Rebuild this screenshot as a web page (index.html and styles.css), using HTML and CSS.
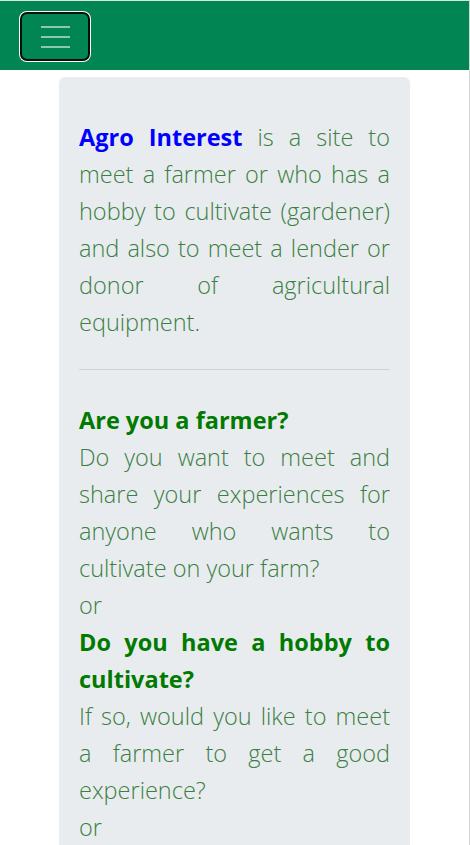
FILE: index.html
```html
<!DOCTYPE html>
<html lang="en">
<head>
<meta charset="utf-8">
<title>Agro Interest</title>
<link rel="stylesheet" href="styles.css">
</head>
<body>
<div class="page">
  <nav class="navbar">
    <button class="toggler" aria-label="Toggle navigation">
      <svg width="29" height="22" viewBox="0 0 29 22" aria-hidden="true">
        <path d="M0 1H29M0 11H29M0 21H29" stroke="rgba(255,255,255,0.55)" stroke-width="2.2"/>
      </svg>
    </button>
  </nav>
  <main class="container">
    <section class="card">
      <p class="text"><strong class="brand">Agro Interest</strong> is a site to meet a farmer or who has a hobby to cultivate (gardener) and also to meet a lender or donor of agricultural equipment.</p>
      <hr class="divider">
      <p class="text">
        <strong class="q">Are you a farmer?</strong><br>
        Do you want to meet and share your experiences for anyone who wants to cultivate on your farm?<br>
        or<br>
        <strong class="q">Do you have a hobby to cultivate?</strong><br>
        If so, would you like to meet a farmer to get a good experience?<br>
        or<br>
      </p>
    </section>
  </main>
</div>
</body>
</html>
```
FILE: styles.css
```css
html, body {
  margin: 0;
  padding: 0;
  background: #fff;
}
body {
  font-family: "Open Sans", "Segoe UI", sans-serif;
}
.page {
  width: 469px;
  min-height: 845px;
  border-right: 1px solid #d4d4d4;
  overflow: hidden;
}
.navbar {
  height: 70px;
  border-top: 1px solid #d9e6df;
  background: #008553;
  display: flex;
  align-items: flex-start;
  padding: 11px 0 0 20px;
  box-sizing: border-box;
}
.toggler {
  width: 70px;
  height: 49px;
  background: #008553;
  border: 2px solid #0b0f0c;
  border-radius: 7px;
  box-shadow: 0 0 0 1px #ffffff;
  display: flex;
  align-items: center;
  justify-content: center;
  padding: 0;
}
.container {
  padding: 7px 0 0 59px;
}
.card {
  width: 351px;
  box-sizing: border-box;
  background: #e9ecef;
  border-radius: 6px;
  padding: 24px 20px 20px;
}
.text {
  margin: 18px 0 0;
  font-size: 23.5px;
  line-height: 37px;
  font-weight: 300;
  color: #3b7f44;
  text-align: justify;
}
.brand {
  color: #0000ff;
  font-weight: 700;
}
.q {
  color: #007a00;
  font-weight: 700;
}
.divider {
  margin: 28px 0 32px;
  border: 0;
  border-top: 1px solid #cfd4d8;
}
.divider + .text {
  margin-top: 0;
}
```
